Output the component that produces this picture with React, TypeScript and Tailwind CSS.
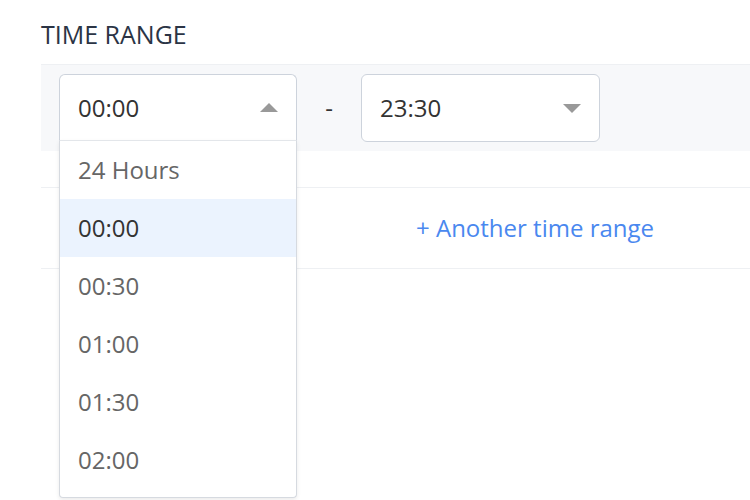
import React from 'react';

const options = ['24 Hours', '00:00', '00:30', '01:00', '01:30', '02:00'];

const Caret: React.FC<{ up?: boolean }> = ({ up }) => (
  <svg width="18" height="9" viewBox="0 0 18 9" className="shrink-0">
    {up ? <path d="M0 9 L9 0 L18 9 Z" fill="#999999" /> : <path d="M0 0 L18 0 L9 9 Z" fill="#999999" />}
  </svg>
);

export default function App() {
  const selected = '00:00';

  return (
    <div
      className="relative w-[750px] h-[500px] overflow-hidden bg-white text-[24px]"
      style={{ fontFamily: '"Open Sans", "Noto Sans", sans-serif' }}
    >
      {/* Title */}
      <div className="h-[64px] pl-[41px] pt-[22px] text-[25px] leading-[25px] text-[#2b3445]">TIME RANGE</div>

      {/* Range row */}
      <div className="ml-[41px] border-t border-[#eef0f3] bg-[#f7f8fa] py-[9px] pl-[18px] flex items-start">
        {/* Open start select */}
        <div className="relative w-[238px]">
          <div className="h-[66px] rounded-t-[6px] border border-b-0 border-[#cdd3dc] bg-white flex items-center justify-between pl-[18px] pr-[18px]">
            <span className="text-[#333333] leading-none">00:00</span>
            <Caret up />
          </div>
          <div className="absolute left-0 top-full z-10 w-full h-[358px] border border-[#d6dae0] border-t-[#e3e6ea] rounded-b-[4px] bg-white shadow-[0_2px_4px_rgba(0,0,0,0.08)]">
            {options.map((o) => (
              <div
                key={o}
                className={
                  o === selected
                    ? 'h-[58px] flex items-center pl-[18px] bg-[#ebf3fe] text-[#333333]'
                    : 'h-[58px] flex items-center pl-[18px] text-[#666666]'
                }
              >
                {o}
              </div>
            ))}
          </div>
        </div>

        <div className="w-[64px] h-[68px] flex items-center justify-center text-[#333333] leading-none">-</div>

        {/* End select */}
        <div className="w-[239px] h-[68px] rounded-[6px] border border-[#cdd3dc] bg-white flex items-center justify-between pl-[18px] pr-[18px]">
          <span className="text-[#333333] leading-none">23:30</span>
          <Caret />
        </div>
      </div>

      {/* Another range */}
      <div className="mt-[36px] ml-[41px] border-t border-b border-[#eef0f3] h-[82px] flex items-center pl-[375px]">
        <button type="button" className="text-[#4a88ef] leading-none">
          + Another time range
        </button>
      </div>
    </div>
  );
}
